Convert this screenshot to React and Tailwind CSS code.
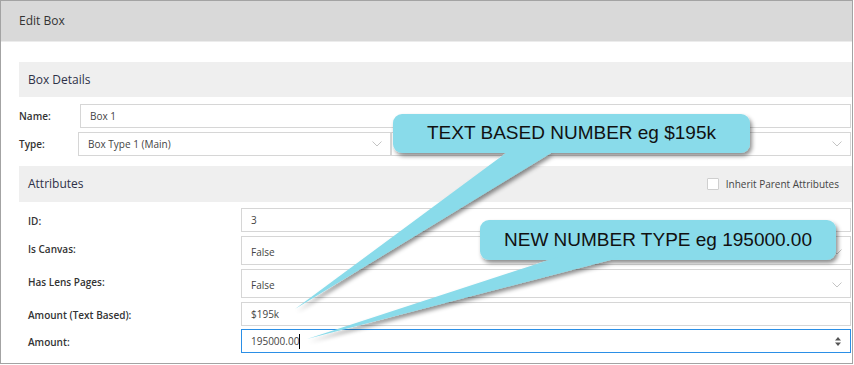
import React from "react";

const Chevron = ({ className }) => (
  <svg className={className} width="10" height="6" viewBox="0 0 10 6" fill="none">
    <path d="M0.5 0.5 L5 5 L9.5 0.5" stroke="#c4c4c4" strokeWidth="1" />
  </svg>
);

const SectionBar = ({ title, h = "h-[36px]", children }) => (
  <div className={`flex items-center justify-between ${h} bg-[#efefef] pl-[9px] pr-[13px]`}>
    <span className="text-[12px] text-[#2e3148]">{title}</span>
    {children}
  </div>
);

const Field = ({ value, select, focused, tall, className = "" }) => (
  <div
    className={`flex items-center justify-between border ${
      focused ? "border-[#2b8fe6]" : "border-[#d6d6d6]"
    } bg-white pl-[9px] pr-[8px] ${tall ? "h-[29px] pt-[3px]" : "h-[24px]"} ${className}`}
  >
    <span className="text-[10px] text-[#444] flex items-center">
      {value}
      {focused && <span className="inline-block w-px h-[15px] bg-black" />}
    </span>
    {select && <Chevron />}
    {focused && (
      <svg width="8" height="11" viewBox="0 0 8 11">
        <path d="M4 1 L7 4.5 L1 4.5 Z" fill="#555" />
        <path d="M1 6.5 L7 6.5 L4 10 Z" fill="#555" />
      </svg>
    )}
  </div>
);

const AttrRow = ({ label, children, gap = "mt-[4px]" }) => (
  <div className={`flex ${gap}`}>
    <div className="w-[222px] shrink-0 pl-[9px] pt-[6px] text-[10px] font-semibold text-[#333]">{label}</div>
    <div className="flex-1">{children}</div>
  </div>
);

export default function App() {
  const font = { fontFamily: '"Open Sans", "Noto Sans", sans-serif' };
  const callout = { fontFamily: '"Liberation Sans", Arial, sans-serif' };
  return (
    <div className="relative w-[854px] h-[365px] bg-white overflow-hidden" style={font}>
      <div className="w-[853px] h-[364px] border border-[#a3a3a3] flex flex-col">
        <div className="h-[41px] bg-[#d9d9d9] flex items-center pl-[18px] text-[12px] text-[#333] border-b border-[#ececec]">
          Edit Box
        </div>
        <div className="pl-[18px] pt-[20px]">
          <SectionBar title="Box Details" h="h-[35px]" />
          <div className="flex items-center mt-[7px]">
            <div className="w-[61px] shrink-0 text-[10px] font-semibold text-[#333]">Name:</div>
            <Field value="Box 1" className="flex-1 mr-px" />
          </div>
          <div className="flex items-center mt-[4px]">
            <div className="w-[59px] shrink-0 text-[10px] font-semibold text-[#333]">Type:</div>
            <Field value="Box Type 1 (Main)" select className="w-[313px]" />
            <Field value="" select className="flex-1 mr-px" />
          </div>
          <div className="mt-[10px]">
            <SectionBar title="Attributes">
              <label className="flex items-center gap-[7px] text-[10px] text-[#444]">
                <span className="w-[12px] h-[12px] border border-[#cfcfcf] bg-white rounded-[1px]" />
                Inherit Parent Attributes
              </label>
            </SectionBar>
          </div>
          <div className="mr-px">
            <AttrRow label="ID:" gap="mt-[6px]">
              <Field value="3" />
            </AttrRow>
            <AttrRow label="Is Canvas:">
              <Field value="False" select tall />
            </AttrRow>
            <AttrRow label="Has Lens Pages:">
              <Field value="False" select tall />
            </AttrRow>
            <AttrRow label="Amount (Text Based):">
              <Field value="$195k" />
            </AttrRow>
            <AttrRow label="Amount:" gap="mt-[3px]">
              <Field value="195000.00" focused />
            </AttrRow>
          </div>
        </div>
      </div>

      <svg className="absolute inset-0 pointer-events-none" width="854" height="365" viewBox="0 0 854 365">
        <defs>
          <filter id="sh" x="-20%" y="-20%" width="140%" height="160%">
            <feDropShadow dx="2" dy="3" stdDeviation="2" floodColor="#000" floodOpacity="0.45" />
          </filter>
        </defs>
        <g filter="url(#sh)" fill="#89dbea">
          <rect x="393" y="114" width="357" height="39" rx="9" />
          <polygon points="510,150 556,150 295,309" />
        </g>
        <g filter="url(#sh)" fill="#89dbea">
          <rect x="480" y="220" width="356" height="40" rx="9" />
          <polygon points="558,257 622,257 307,339" />
        </g>
      </svg>
      <div
        className="absolute left-[393px] top-[114px] w-[357px] h-[39px] flex items-center justify-center text-[19px] text-[#111]"
        style={callout}
      >
        TEXT BASED NUMBER eg $195k
      </div>
      <div
        className="absolute left-[480px] top-[220px] w-[356px] h-[40px] flex items-center justify-center text-[19px] text-[#111]"
        style={callout}
      >
        NEW NUMBER TYPE eg 195000.00
      </div>
    </div>
  );
}
